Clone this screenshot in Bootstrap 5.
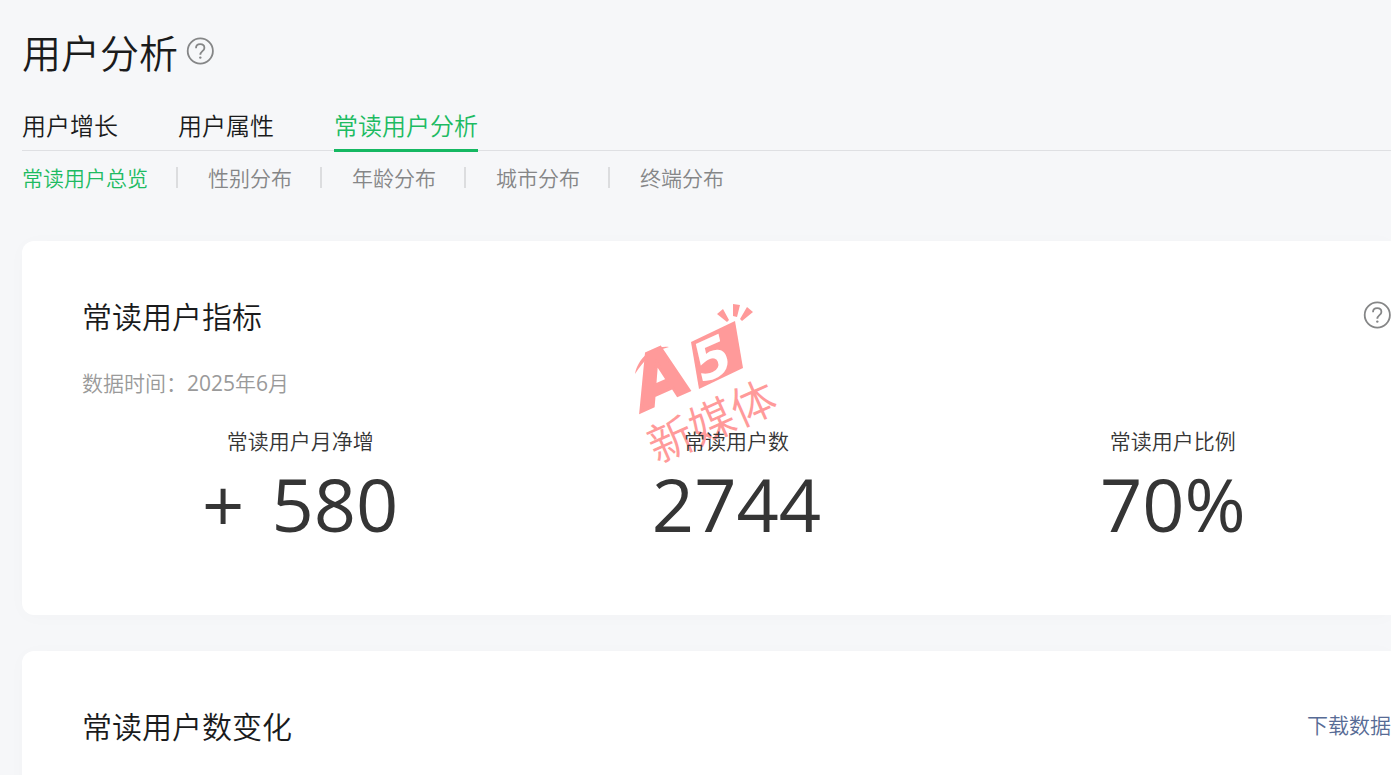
<!DOCTYPE html>
<html lang="zh-CN">
<head>
<meta charset="utf-8">
<meta name="viewport" content="width=device-width, initial-scale=1">
<title>用户分析</title>
<link href="https://cdn.jsdelivr.net/npm/bootstrap@5.3.0/dist/css/bootstrap.min.css" rel="stylesheet">
<style>
  body { background: #f6f7f9; color: #1a1b1c; font-family: "Noto Sans CJK SC", sans-serif; font-weight: 350; overflow-x: hidden; }
  .page { padding: 24px 0 0 22px; }
  .page-title { font-size: 39px; line-height: 54px; font-weight: 350; }
  .help { color: #858687; width: 28px; height: 28px; }
  .main-tabs { gap: 60px; margin-top: 23px; border-bottom: 1px solid #dfe0e3; }
  .main-tabs .nav-link { padding: 0; font-size: 24px; line-height: 48px; height: 48px; color: #1a1b1c; margin-bottom: -2px; border-bottom: 3px solid transparent; box-sizing: content-box; }
  .main-tabs .nav-link.active { color: #1dbb62; border-color: #15b862; }
  .sub-tabs { font-size: 21px; line-height: 32px; padding-top: 10px; }
  .sub-tabs a { color: #858687; text-decoration: none; }
  .sub-tabs a.active { color: #1dbb62; }
  .sub-tabs li + li { display: flex; align-items: center; }
  .sub-tabs li + li::before { content: ""; width: 2px; height: 21px; background: #dcdddf; margin: 0 30px 0 28px; }
  .panel { background: #fff; border-radius: 12px 0 0 12px; padding: 52px 0 62px 60px; box-shadow: 0 2px 20px rgba(0,0,0,.02); }
  .panel + .panel { margin-top: 36px; }
  .panel-title { font-size: 30px; line-height: 44px; font-weight: 350; }
  .period { font-size: 21px; line-height: 32px; color: #9a9a9a; margin-top: 29px; }
  .latin { font-family: "Open Sans", "Noto Sans CJK SC", sans-serif; font-weight: 400; }
  .metrics { margin-top: 26px; color: #353535; }
  .metric-label { font-size: 21px; line-height: 30px; }
  .metric-value { font-family: "Open Sans", sans-serif; font-size: 74px; line-height: 98px; font-weight: 400; }
  .download { font-size: 21px; color: #576b95; text-decoration: none; }
  .watermark { left: 606px; top: 54px; width: 170px; height: 190px; overflow: visible; pointer-events: none; }
</style>
</head>
<body>
<svg class="d-none">
  <symbol id="help" viewBox="0 0 28 28">
    <circle cx="14.3" cy="14" r="12.6" fill="none" stroke="currentColor" stroke-width="1.8"/>
    <path d="M10 11.2C10 8.7 11.7 7.2 14.2 7.2s4.2 1.5 4.2 3.7c0 3.3-4.1 3.2-4.1 6.9" fill="none" stroke="currentColor" stroke-width="1.8"/>
    <circle cx="14.3" cy="20.6" r="1.2" fill="currentColor"/>
  </symbol>
</svg>
<main class="page">
  <header class="d-flex align-items-center gap-2">
    <h1 class="page-title mb-0">用户分析</h1>
    <button type="button" class="btn p-0 border-0 d-flex" aria-label="帮助"><svg class="help"><use href="#help"/></svg></button>
  </header>
  <nav class="nav main-tabs">
    <a class="nav-link" href="#">用户增长</a>
    <a class="nav-link" href="#">用户属性</a>
    <a class="nav-link active" aria-current="page" href="#">常读用户分析</a>
  </nav>
  <ul class="sub-tabs list-unstyled d-flex mb-0">
    <li><a class="active" href="#">常读用户总览</a></li>
    <li><a href="#">性别分布</a></li>
    <li><a href="#">年龄分布</a></li>
    <li><a href="#">城市分布</a></li>
    <li><a href="#">终端分布</a></li>
  </ul>
  <section class="panel position-relative mt-5">
    <div class="d-flex justify-content-between align-items-center">
      <h2 class="panel-title mb-0">常读用户指标</h2>
      <button type="button" class="btn p-0 border-0 d-flex" aria-label="指标说明"><svg class="help"><use href="#help"/></svg></button>
    </div>
    <p class="period mb-0">数据时间：<span class="latin">2025</span>年<span class="latin">6</span>月</p>
    <svg class="watermark position-absolute" viewBox="0 0 170 190" fill="#ff9a9a">
      <path d="M7 79C10 63 25 50 41 52C25 56 16 65 7 79Z"/>
      <path d="M63 47L107 26L115 73L71 94Z"/>
      <path d="M89 19L95 14L101 25L99 27ZM105 9L112 10L109 22L105 21ZM119 12L125 17L114 26L112 24Z"/>
      <g font-family="DejaVu Sans, sans-serif" font-weight="700" font-style="italic">
        <text transform="translate(17 115) rotate(-24)" font-size="70" stroke="#ff9a9a" stroke-width="3">A</text>
        <text transform="translate(75 88) rotate(-24)" font-size="53" fill="#fff">5</text>
      </g>
      <text transform="translate(29 169) rotate(-24)" font-family="Noto Sans CJK SC, sans-serif" font-weight="350" font-size="45">新媒体</text>
    </svg>
    <div class="metrics row g-0 text-center position-relative">
      <div class="col-4"><div class="metric-label">常读用户月净增</div><div class="metric-value"><span class="me-2">+</span> 580</div></div>
      <div class="col-4"><div class="metric-label">常读用户数</div><div class="metric-value">2744</div></div>
      <div class="col-4"><div class="metric-label">常读用户比例</div><div class="metric-value">70%</div></div>
    </div>
  </section>
  <section class="panel">
    <div class="d-flex justify-content-between align-items-center">
      <h2 class="panel-title mb-0">常读用户数变化</h2>
      <a class="download" href="#">下载数据</a>
    </div>
  </section>
</main>
<script src="https://cdn.jsdelivr.net/npm/bootstrap@5.3.0/dist/js/bootstrap.bundle.min.js"></script>
</body>
</html>
